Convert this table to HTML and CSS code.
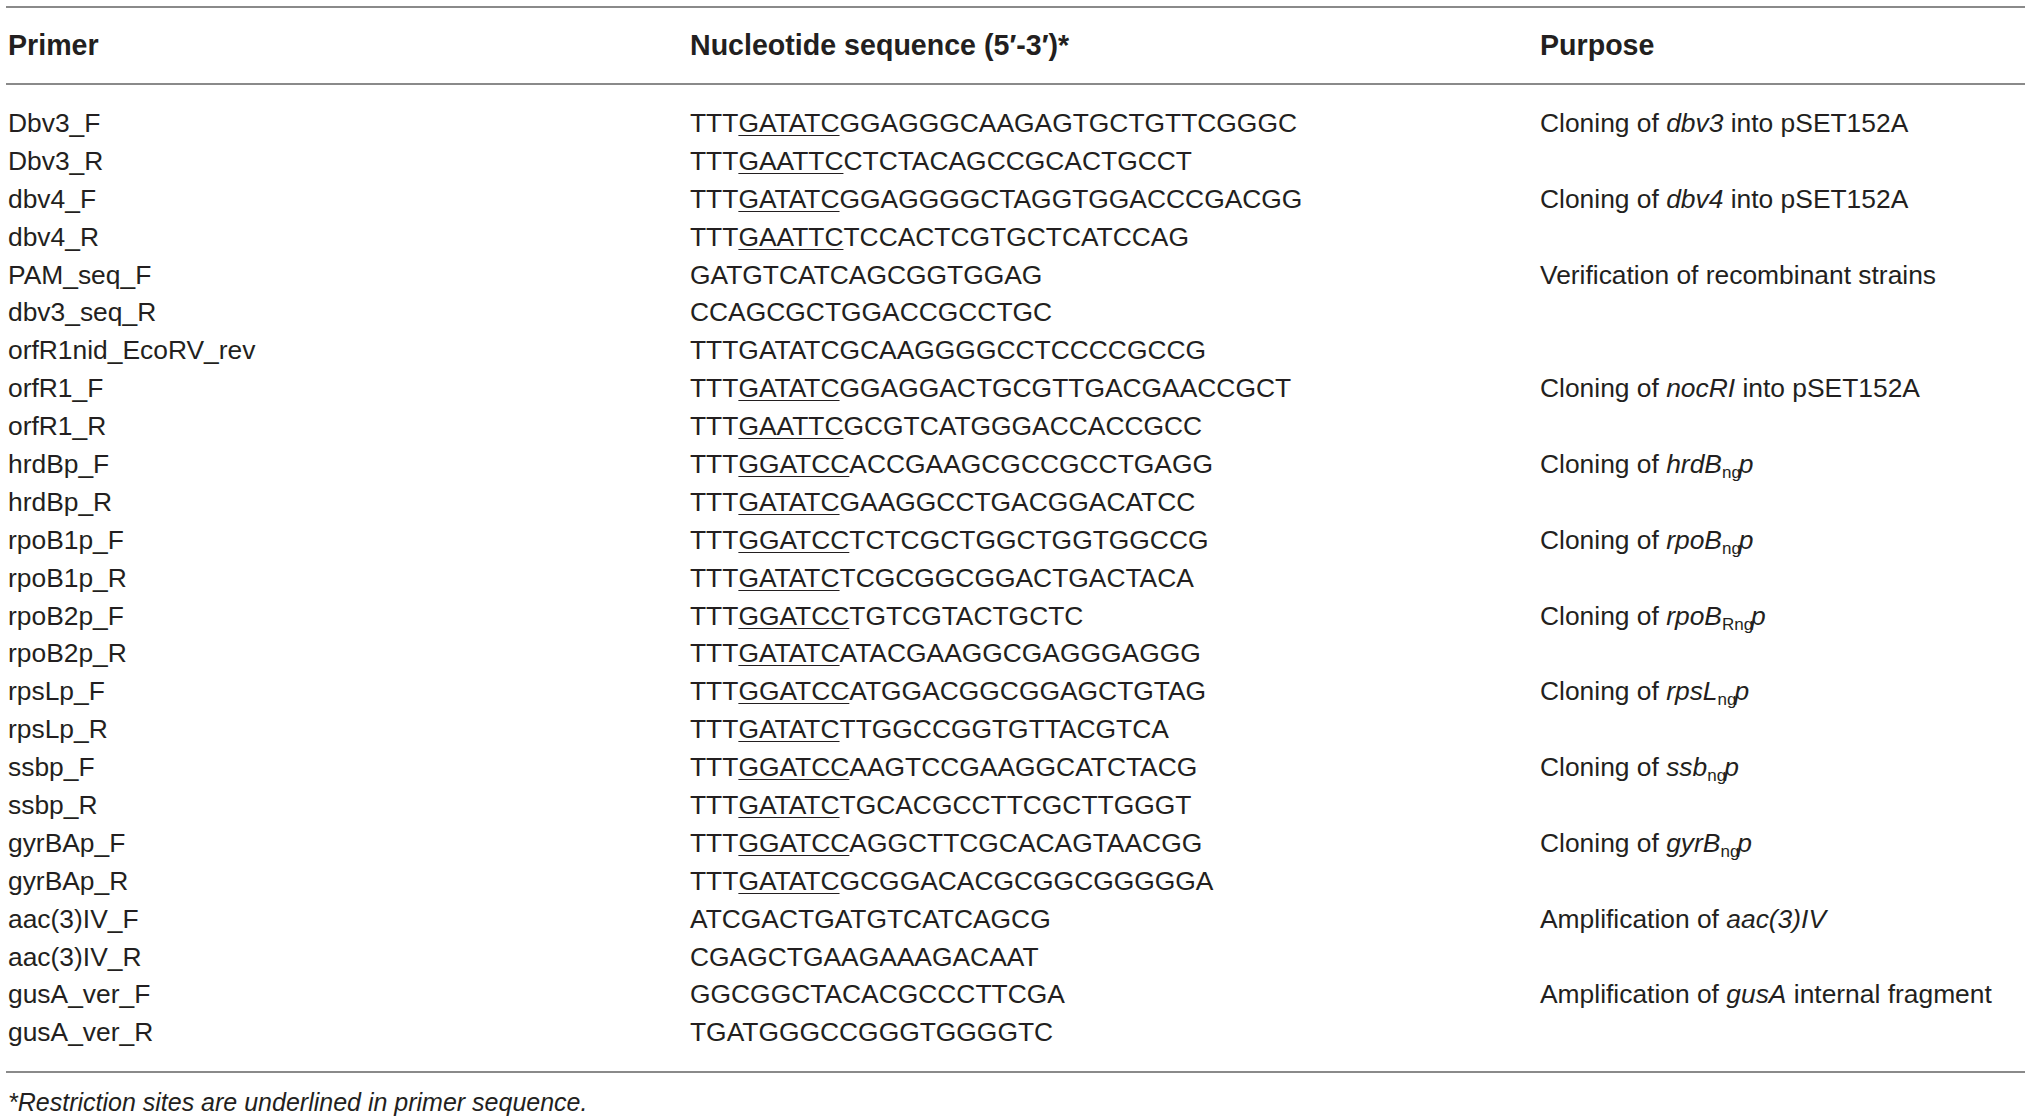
FILE: index.html
```html
<!DOCTYPE html>
<html>
<head>
<meta charset="utf-8">
<link rel="stylesheet" href="styles.css">
</head>
<body>
<div class="page">
<table class="primers">
<thead>
<tr><th class="c1">Primer</th><th class="c2">Nucleotide sequence (5′-3′)*</th><th class="c3">Purpose</th></tr>
</thead>
<tbody>
<tr><td>Dbv3_F</td><td>TTT<u>GATATC</u>GGAGGGCAAGAGTGCTGTTCGGGC</td><td>Cloning of <i>dbv3</i> into pSET152A</td></tr>
<tr><td>Dbv3_R</td><td>TTT<u>GAATTC</u>CTCTACAGCCGCACTGCCT</td><td></td></tr>
<tr><td>dbv4_F</td><td>TTT<u>GATATC</u>GGAGGGGCTAGGTGGACCCGACGG</td><td>Cloning of <i>dbv4</i> into pSET152A</td></tr>
<tr><td>dbv4_R</td><td>TTT<u>GAATTC</u>TCCACTCGTGCTCATCCAG</td><td></td></tr>
<tr><td>PAM_seq_F</td><td>GATGTCATCAGCGGTGGAG</td><td>Verification of recombinant strains</td></tr>
<tr><td>dbv3_seq_R</td><td>CCAGCGCTGGACCGCCTGC</td><td></td></tr>
<tr><td>orfR1nid_EcoRV_rev</td><td>TTTGATATCGCAAGGGGCCTCCCCGCCG</td><td></td></tr>
<tr><td>orfR1_F</td><td>TTT<u>GATATC</u>GGAGGACTGCGTTGACGAACCGCT</td><td>Cloning of <i>nocRI</i> into pSET152A</td></tr>
<tr><td>orfR1_R</td><td>TTT<u>GAATTC</u>GCGTCATGGGACCACCGCC</td><td></td></tr>
<tr><td>hrdBp_F</td><td>TTT<u>GGATCC</u>ACCGAAGCGCCGCCTGAGG</td><td>Cloning of <i>hrdB</i><sub>ng</sub><i class="p">p</i></td></tr>
<tr><td>hrdBp_R</td><td>TTT<u>GATATC</u>GAAGGCCTGACGGACATCC</td><td></td></tr>
<tr><td>rpoB1p_F</td><td>TTT<u>GGATCC</u>TCTCGCTGGCTGGTGGCCG</td><td>Cloning of <i>rpoB</i><sub>ng</sub><i class="p">p</i></td></tr>
<tr><td>rpoB1p_R</td><td>TTT<u>GATATC</u>TCGCGGCGGACTGACTACA</td><td></td></tr>
<tr><td>rpoB2p_F</td><td>TTT<u>GGATCC</u>TGTCGTACTGCTC</td><td>Cloning of <i>rpoB</i><sub>Rng</sub><i class="p">p</i></td></tr>
<tr><td>rpoB2p_R</td><td>TTT<u>GATATC</u>ATACGAAGGCGAGGGAGGG</td><td></td></tr>
<tr><td>rpsLp_F</td><td>TTT<u>GGATCC</u>ATGGACGGCGGAGCTGTAG</td><td>Cloning of <i>rpsL</i><sub>ng</sub><i class="p">p</i></td></tr>
<tr><td>rpsLp_R</td><td>TTT<u>GATATC</u>TTGGCCGGTGTTACGTCA</td><td></td></tr>
<tr><td>ssbp_F</td><td>TTT<u>GGATCC</u>AAGTCCGAAGGCATCTACG</td><td>Cloning of <i>ssb</i><sub>ng</sub><i class="p">p</i></td></tr>
<tr><td>ssbp_R</td><td>TTT<u>GATATC</u>TGCACGCCTTCGCTTGGGT</td><td></td></tr>
<tr><td>gyrBAp_F</td><td>TTT<u>GGATCC</u>AGGCTTCGCACAGTAACGG</td><td>Cloning of <i>gyrB</i><sub>ng</sub><i class="p">p</i></td></tr>
<tr><td>gyrBAp_R</td><td>TTT<u>GATATC</u>GCGGACACGCGGCGGGGGA</td><td></td></tr>
<tr><td>aac(3)IV_F</td><td>ATCGACTGATGTCATCAGCG</td><td>Amplification of <i>aac(3)IV</i></td></tr>
<tr><td>aac(3)IV_R</td><td>CGAGCTGAAGAAAGACAAT</td><td></td></tr>
<tr><td>gusA_ver_F</td><td>GGCGGCTACACGCCCTTCGA</td><td>Amplification of <i>gusA</i> internal fragment</td></tr>
<tr><td>gusA_ver_R</td><td>TGATGGGCCGGGTGGGGTC</td><td></td></tr>
</tbody>
</table>
<p class="note">*Restriction sites are underlined in primer sequence.</p>
</div>
</body>
</html>
```
FILE: styles.css
```css
html, body {
  margin: 0;
  padding: 0;
  background: #ffffff;
}
body {
  font-family: "Liberation Sans", Arial, sans-serif;
  color: #231f20;
}
.page {
  padding: 6px 6px 0 6px;
}
.primers {
  width: 2019px;
  border-collapse: collapse;
  font-size: 26.4px;
}
.primers th {
  text-align: left;
  font-weight: bold;
  font-size: 28.6px;
  height: 75px;
  padding: 0 0 0 2px;
  border-top: 2px solid #8a8a8a;
  border-bottom: 2px solid #8a8a8a;
  vertical-align: middle;
}
.primers .c1 { width: 680px; }
.primers .c2 { width: 848px; }
.primers td {
  height: 37.9px;
  padding: 0 0 0 2px;
  line-height: 30px;
  vertical-align: middle;
  white-space: nowrap;
}
.primers tbody tr:first-child td { padding-top: 19px; }
.primers tbody tr:last-child td {
  padding-bottom: 20px;
  border-bottom: 2px solid #8a8a8a;
}
.primers u {
  text-decoration-thickness: 1px;
  text-underline-offset: 3px;
}
.primers sub {
  font-size: 17px;
  vertical-align: -5px;
  line-height: 0;
}
.primers i.p { margin-left: -2px; }
.note {
  margin: 14px 0 0 0;
  font-size: 25px;
  font-style: italic;
  line-height: 30px;
  padding-left: 2px;
}
```
